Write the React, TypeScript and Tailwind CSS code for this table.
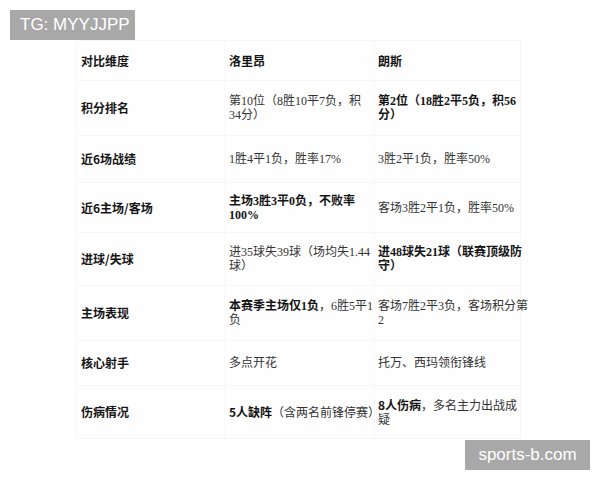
import React from "react";

type Seg = { t: string; b?: boolean; sans?: boolean };
type Cell = Seg[][]; // lines of segments

const rows: { label: string; h: string; a: Cell; b: Cell }[] = [
  {
    label: "积分排名",
    h: "h-[55px]",
    a: [[{ t: "第10位（8胜10平7负，积" }], [{ t: "34分）" }]],
    b: [[{ t: "第2位（18胜2平5负，积56", b: true }], [{ t: "分）", b: true }]],
  },
  {
    label: "近6场战绩",
    h: "h-[47px]",
    a: [[{ t: "1胜4平1负，胜率17%" }]],
    b: [[{ t: "3胜2平1负，胜率50%" }]],
  },
  {
    label: "近6主场/客场",
    h: "h-[50px]",
    a: [[{ t: "主场3胜3平0负，不败率", b: true }], [{ t: "100%", b: true }]],
    b: [[{ t: "客场3胜2平1负，胜率50%" }]],
  },
  {
    label: "进球/失球",
    h: "h-[53px]",
    a: [[{ t: "进35球失39球（场均失1.44" }], [{ t: "球）" }]],
    b: [[{ t: "进48球失21球（联赛顶级防", b: true }], [{ t: "守）", b: true }]],
  },
  {
    label: "主场表现",
    h: "h-[55px]",
    a: [[{ t: "本赛季主场仅1负", b: true }, { t: "，6胜5平1" }], [{ t: "负" }]],
    b: [[{ t: "客场7胜2平3负，客场积分第" }], [{ t: "2" }]],
  },
  {
    label: "核心射手",
    h: "h-[45px]",
    a: [[{ t: "多点开花" }]],
    b: [[{ t: "托万、西玛领衔锋线" }]],
  },
  {
    label: "伤病情况",
    h: "h-[52px]",
    a: [[{ t: "5人缺阵", b: true, sans: true }, { t: "（含两名前锋停赛）" }]],
    b: [[{ t: "8人伤病", b: true, sans: true }, { t: "，多名主力出战成" }], [{ t: "疑" }]],
  },
];

const serif = "font-['Liberation_Serif','Noto_Sans_CJK_SC',serif]";
const sans = "font-['Noto_Sans_CJK_SC','Liberation_Sans',sans-serif]";

function CellView({ cell }: { cell: Cell }) {
  return (
    <div className="flex flex-col text-[12px] leading-[14px]">
      {cell.map((line, i) => (
        <div key={i} className="whitespace-nowrap">
          {line.map((s, j) => (
            <span
              key={j}
              className={
                (s.sans ? sans : serif) +
                (s.b ? " font-bold text-[#151515]" : " text-[#333333]")
              }
            >
              {s.t}
            </span>
          ))}
        </div>
      ))}
    </div>
  );
}

export default function App() {
  return (
    <div className="relative w-[600px] h-[480px] bg-white overflow-hidden">
      <div className="absolute left-[10px] top-[10px] w-[125px] h-[30px] bg-[#a8a8a8] flex items-center pl-[10px] text-white text-[17px] font-['Liberation_Sans',sans-serif]">
        TG: MYYJJPP
      </div>

      <div className="pt-[40px] pl-[75px]">
        <div className="w-[446px] bg-[#fefefe] border border-[#f6f6f6]">
          <div className="grid grid-cols-[148px_150px_148px] h-[40px] border-b border-[#f6f6f6]">
            <div className={`flex items-center pl-[5px] text-[12px] font-bold text-[#151515] ${sans}`}>对比维度</div>
            <div className={`flex items-center pl-[4px] text-[12px] font-bold text-[#151515] border-l border-[#f8f8f8] ${sans}`}>洛里昂</div>
            <div className={`flex items-center pl-[3px] text-[12px] font-bold text-[#151515] border-l border-[#f8f8f8] ${sans}`}>朗斯</div>
          </div>
          {rows.map((r, i) => (
            <div
              key={r.label}
              className={`grid grid-cols-[148px_150px_148px] ${r.h} ${i < rows.length - 1 ? "border-b border-[#f6f6f6]" : ""}`}
            >
              <div className={`flex items-center pl-[5px] text-[12px] font-bold text-[#151515] ${sans}`}>{r.label}</div>
              <div className="flex items-center pl-[4px] border-l border-[#f8f8f8]">
                <CellView cell={r.a} />
              </div>
              <div className="flex items-center pl-[3px] border-l border-[#f8f8f8]">
                <CellView cell={r.b} />
              </div>
            </div>
          ))}
        </div>
      </div>

      <div className="absolute left-[465px] top-[440px] w-[125px] h-[30px] bg-[#a8a8a8] flex items-center justify-center text-white text-[17px] font-['Liberation_Sans',sans-serif]">
        sports-b.com
      </div>
    </div>
  );
}
